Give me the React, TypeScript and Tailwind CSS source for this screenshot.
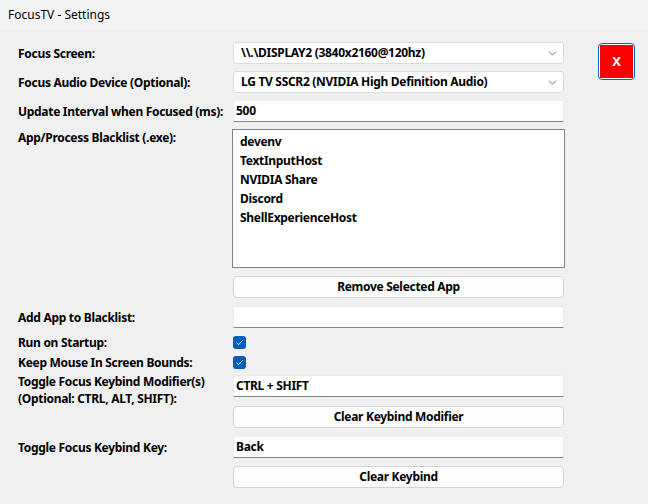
import {ChevronDown} from "lucide-react";

const blacklist = ["devenv", "TextInputHost", "NVIDIA Share", "Discord", "ShellExperienceHost"];

function Label({children, className = ""}: {children: React.ReactNode, className?: string}) {
    return <div className={"w-[215px] shrink-0 whitespace-nowrap leading-[17px] " + className}>{children}</div>
}

function Combo({value}: {value: string}) {
    return (
        <div className="w-[331px] h-[22px] bg-white border border-[#dcdcdc] rounded-[3px] flex items-center justify-between pl-[7px] pr-[4px]">
            <span>{value}</span>
            <ChevronDown size={13} strokeWidth={1.4} className="text-[#444444]"/>
        </div>
    )
}

function TextBox({value = ""}: {value?: string}) {
    return (
        <div className="w-[331px] h-[22px] bg-white border border-[#ececec] border-b-[#858585] rounded-t-[2px] flex items-center pl-[2px]">
            {value}
        </div>
    )
}

function Button({text}: {text: string}) {
    return (
        <div className="w-[331px] h-[22px] bg-[#fdfdfd] border border-[#d3d3d3] rounded-[4px] flex items-center justify-center">
            {text}
        </div>
    )
}

function Check() {
    return (
        <div className="w-[13px] h-[13px] bg-[#005fb8] rounded-[3px] flex items-center justify-center">
            <svg width="9" height="9" viewBox="0 0 9 9" fill="none">
                <path d="M1.5 4.8 L3.6 6.7 L7.6 2.4" stroke="#ffffff" strokeWidth="0.9"/>
            </svg>
        </div>
    )
}

export default function App() {
    return (
        <div className="w-[648px] h-[504px] bg-[#f0f0f0] text-black font-['Noto_Sans',sans-serif] text-[12px] overflow-hidden">
            <div className="h-[30px] bg-[#f3f3f3] flex items-center pl-[8px] text-[12px] font-normal">
                FocusTV - Settings
            </div>
            <div className="flex pl-[18px] pt-[12px] font-bold tracking-[-0.3px]">
                <div className="flex flex-col">
                    <div className="flex items-center h-[22px]">
                        <Label>Focus Screen:</Label>
                        <Combo value="\\.\DISPLAY2 (3840x2160@120hz)"/>
                    </div>
                    <div className="flex items-center h-[22px] mt-[7px]">
                        <Label>Focus Audio Device (Optional):</Label>
                        <Combo value="LG TV SSCR2 (NVIDIA High Definition Audio)"/>
                    </div>
                    <div className="flex items-center h-[22px] mt-[7px]">
                        <Label>Update Interval when Focused (ms):</Label>
                        <TextBox value="500"/>
                    </div>
                    <div className="flex mt-[7px]">
                        <Label>App/Process Blacklist (.exe):</Label>
                        <div className="-ml-[1px] w-[333px] h-[139px] bg-white border border-[#828282] pt-[2px] pl-[7px]">
                            {blacklist.map((app) => (
                                <div key={app} className="h-[19px] leading-[19px]">{app}</div>
                            ))}
                        </div>
                    </div>
                    <div className="flex items-center h-[22px] mt-[8px]">
                        <Label></Label>
                        <Button text="Remove Selected App"/>
                    </div>
                    <div className="flex items-center h-[22px] mt-[8px]">
                        <Label>Add App to Blacklist:</Label>
                        <TextBox/>
                    </div>
                    <div className="flex items-center h-[14px] mt-[7px]">
                        <Label>Run on Startup:</Label>
                        <Check/>
                    </div>
                    <div className="flex items-center h-[14px] mt-[6px]">
                        <Label>Keep Mouse In Screen Bounds:</Label>
                        <Check/>
                    </div>
                    <div className="flex items-start h-[22px] mt-[6px]">
                        <Label className="-mt-[2px]">Toggle Focus Keybind Modifier(s)<br/>(Optional: CTRL, ALT, SHIFT):</Label>
                        <TextBox value="CTRL + SHIFT"/>
                    </div>
                    <div className="flex items-center h-[22px] mt-[9px]">
                        <Label></Label>
                        <Button text="Clear Keybind Modifier"/>
                    </div>
                    <div className="flex items-center h-[22px] mt-[8px]">
                        <Label>Toggle Focus Keybind Key:</Label>
                        <TextBox value="Back"/>
                    </div>
                    <div className="flex items-center h-[22px] mt-[8px]">
                        <Label></Label>
                        <Button text="Clear Keybind"/>
                    </div>
                </div>
                <div className="ml-[33px] mt-[1px]">
                    <div className="w-[37px] h-[37px] rounded-[4px] border border-[#0067c0] bg-white p-[1px]">
                        <div className="w-full h-full bg-[#ff0000] flex items-center justify-center text-white text-[13px]">X</div>
                    </div>
                </div>
            </div>
        </div>
    );
}
